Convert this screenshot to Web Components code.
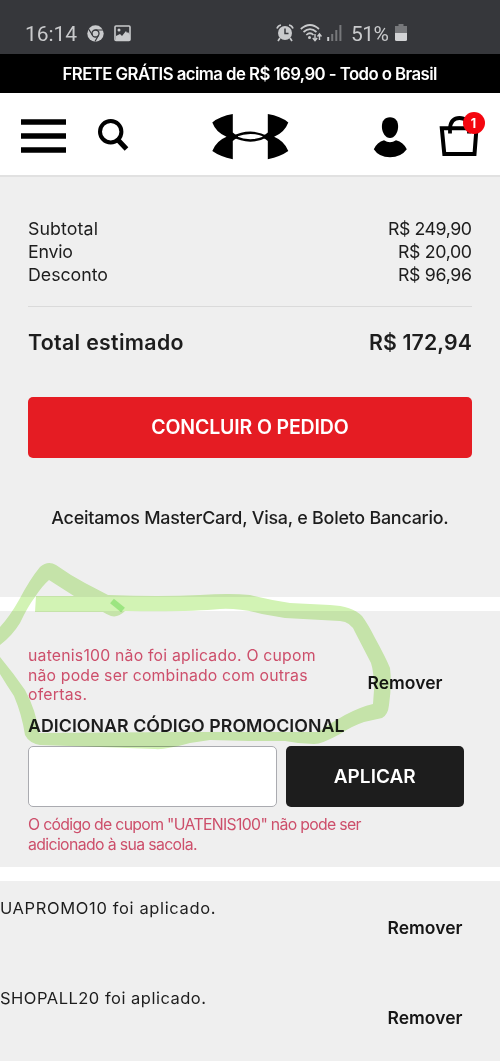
<!DOCTYPE html>
<html lang="pt-BR">
<head>
<meta charset="utf-8">
<title>Sacola</title>
<style>
body{margin:0;background:#fff;font-family:Inter,"Liberation Sans",sans-serif;color:#1d1d1d}
</style>
</head>
<body>
<bag-page></bag-page>
<script>
const define = (name, html, Base = HTMLElement) => {
  const t = document.createElement('template');
  t.innerHTML = html;
  customElements.define(name, class extends Base {
    constructor() {
      super();
      this.attachShadow({ mode: 'open' }).append(t.content.cloneNode(true));
    }
  });
};

/* One line of text, tracked so that it fills its measure. */
customElements.define('text-line', class extends HTMLElement {
  constructor() {
    super();
    this.attachShadow({ mode: 'open' }).innerHTML =
      '<style>:host{display:block;white-space:nowrap;width:max-content}span{display:inline-block}</style><span><slot></slot></span>';
  }
  connectedCallback() {
    const measure = parseFloat(this.getAttribute('measure'));
    const span = this.shadowRoot.querySelector('span');
    const n = this.textContent.length;
    const natural = span.getBoundingClientRect().width;
    if (!measure || !natural || n < 2) return;
    const ls = (measure - natural) / (n - 1);
    span.style.letterSpacing = ls.toFixed(3) + 'px';
    span.style.marginRight = (-ls).toFixed(3) + 'px';
  }
});

define('status-bar', `
<style>
:host{display:flex;box-sizing:border-box;height:54px;background:#36373b;color:#c9cacc;font:21px/24px Roboto,sans-serif;padding:22px 93px 0 25px;align-items:flex-start}
svg{display:block}
.s{flex:1}
.chrome{margin:3px 0 0 10px}.pic{margin:3px 0 0 10px}
.alarm{margin-top:1px}.wifi{margin:1px 0 0 6px}.sig{margin:2px 9px 0 5px}.bat{margin:2px 0 0 6px}
</style>
<text-line measure="52">16:14</text-line>
<svg class="chrome" width="17" height="17" viewBox="0 0 17 17"><circle cx="8.5" cy="8.5" r="8.2" fill="#c9cacc"/><circle cx="8.5" cy="8.5" r="3.5" fill="none" stroke="#36373b" stroke-width="1.3"/><path d="M8.500 5H16M5.500 10.300L1.600 4M11.500 10.300L8 16.500" stroke="#36373b" stroke-width="1.200"/></svg>
<svg class="pic" width="17" height="17" viewBox="0 0 17 17"><rect x="1" y="1" width="15" height="14.500" rx="1" fill="none" stroke="#c9cacc" stroke-width="1.600"/><path d="M2 11l4-2 2 2 4-5 1 2 1-1 2 3v5H2z" fill="#c9cacc"/><circle cx="5" cy="5" r="1.500" fill="#c9cacc"/></svg>
<span class="s"></span>
<svg class="alarm" width="18" height="19" viewBox="0 0 18 19"><circle cx="9" cy="10" r="7" fill="#c9cacc"/><path d="M1 5.500Q2 2.500 5 2M17 5.500Q16 2.500 13 2M4 15l-2 3M14 15l2 3" stroke="#c9cacc" stroke-width="1.700" fill="none"/><path d="M9 5.500V10.500H12.500" fill="none" stroke="#36373b" stroke-width="1.500"/></svg>
<svg class="wifi" width="22" height="19" viewBox="0 0 22 19"><path d="M.800 6Q10 -2 19 6M3.500 9Q10 3.300 16.500 9M6.300 12Q10 8.500 13.500 12" fill="none" stroke="#c9cacc" stroke-width="1.700"/><circle cx="9.500" cy="14.500" r="1.500" fill="#c9cacc"/><path d="M15 11v6M12.800 15l2.200 2.600 2.200-2.600M19.500 17v-6M17.500 13.500l2-2.600 2 2.600" fill="none" stroke="#c9cacc" stroke-width="1.400"/></svg>
<svg class="sig" width="15" height="17" viewBox="0 0 15 17"><path d="M1.200 17v-4" stroke="#c9cacc" stroke-width="2"/><path d="M5.200 17V10M9.300 17V6M13.400 17V1" stroke="#77787b" stroke-width="2"/></svg>
<text-line measure="38">51%</text-line>
<svg class="bat" width="12" height="17" viewBox="0 0 12 17"><path d="M3.500 0h5v2H12v7H0V2h3.500z" fill="#77787b"/><path d="M0 9h12v6.500q0 1.500-1.500 1.500h-9Q0 17 0 15.500z" fill="#d2d3d5"/></svg>`);

define('promo-banner', `
<style>:host{display:flex;justify-content:center;height:39px;background:#000;color:#fff;font-size:16.800px;font-weight:600;line-height:40px}</style>
<text-line measure="375">FRETE GRÁTIS acima de R$ 169,90 - Todo o Brasil</text-line>`);

define('cart-icon', `
<style>
:host{display:block;position:relative;width:46px;height:46px}
svg{display:block}
b{position:absolute;left:23.500px;top:0;width:22px;height:22px;border-radius:50%;background:#f4060f;color:#fff;font-size:12.500px;line-height:23px;text-align:center;font-weight:700}
</style>
<svg width="46" height="46" viewBox="439 112 46 46"><path d="M441.800 128.200H476.500L474.500 154H444.300Z" fill="none" stroke="#000" stroke-width="4"/><path d="M450 133.500V128Q451 118 459.500 118Q468 118 469 128V133.500" fill="none" stroke="#000" stroke-width="3.800"/></svg>
<b><slot></slot></b>`);

define('site-header', `
<style>
:host{display:flex;box-sizing:border-box;height:84px;background:#fff;border-bottom:2px solid #e1e1e1;padding:19px 15px 0 21px;align-items:flex-start}
svg{display:block}
.menu{margin-top:7px}.search{margin:5px 0 0 32px}.logo{margin:1px 0 0 82px}.user{margin:4px 0 0 84px}cart-icon{margin-left:31px}
svg,cart-icon{flex:none}
</style>
<svg class="menu" width="45" height="34"><path d="M0 3H45M0 17H45M0 31H45" stroke="#000" stroke-width="5.600"/></svg>
<svg class="search" width="31" height="36" viewBox="98 117 31 36"><circle cx="110.700" cy="131.700" r="10.700" fill="none" stroke="#000" stroke-width="4"/><path d="M118 140L126.500 149" stroke="#000" stroke-width="5"/></svg>
<svg class="logo" width="78" height="48" viewBox="211 113 78 48"><g id="w"><path d="M232.800 114V132.500Q234.500 134.500 238 135.500V137.800Q234.500 139 232.800 141V159.300Q220 156.500 212.300 151Q216 141 226.500 136.700Q216 132.500 212.300 122.500Q220 116 232.800 114Z"/></g><use href="#w" transform="translate(500.600 0) scale(-1 1)"/><path fill-rule="evenodd" d="M232 136.600Q241 131.500 250.300 131.500T268.500 136.600Q260 141.700 250.300 141.700T232 136.600ZM237 136.600Q243 139.200 250.300 139.200T263.500 136.600Q257.500 133.900 250.300 133.900T237 136.600Z"/></svg>
<svg class="user" width="35" height="42" viewBox="373 116 35 42"><path d="M390 117.200C395.500 117.200 398.300 121 398.100 127C397.900 133 394.500 138 390 138S382.100 133 381.900 127C381.700 121 384.500 117.200 390 117.200Z"/><path d="M384 140.200Q390 144.200 396 140.200Q403.500 142 406.800 149.300Q401 157.300 390 157.300T373.800 149.300Q377 142 384 140.200Z"/></svg>
<cart-icon>1</cart-icon>`);

define('sum-row', `
<style>:host{display:flex;justify-content:space-between;height:23px;line-height:23px;font-size:17.800px}
:host([total]){font-size:21.300px;font-weight:600;height:30px;line-height:31px}</style>
<slot></slot>`);

define('order-summary', `
<style>
:host{display:block;box-sizing:border-box;height:420px;background:#efefef;padding:40px 28px 0}
hr{border:0;border-top:1.500px solid #dadada;margin:20px 0 20px}
button{display:flex;justify-content:center;width:100%;height:61px;border:0;border-radius:5px;background:#e51c23;color:#fff;font:600 19.500px/61px Inter,sans-serif;margin:40px 0 44px;padding:0}
.pay{display:flex;justify-content:center;font-size:17.900px;line-height:31px;font-weight:450}
</style>
<sum-row><text-line measure="70">Subtotal</text-line><text-line measure="84">R$ 249,90</text-line></sum-row>
<sum-row><text-line measure="45">Envio</text-line><text-line measure="74">R$ 20,00</text-line></sum-row>
<sum-row><text-line measure="80">Desconto</text-line><text-line measure="74">R$ 96,96</text-line></sum-row>
<hr>
<sum-row total><text-line measure="155.5">Total estimado</text-line><text-line measure="103">R$ 172,94</text-line></sum-row>
<button><text-line measure="197.5">CONCLUIR O PEDIDO</text-line></button>
<div class="pay"><text-line measure="397.5">Aceitamos MasterCard, Visa, e Boleto Bancario.</text-line></div>`);

define('remove-link', `
<style>:host{display:block;color:#151515;font-size:17.500px;font-weight:600;line-height:25px}</style>
<text-line measure="75">Remover</text-line>`);

define('promo-form', `
<style>
:host{display:block;box-sizing:border-box;height:256px;background:#efefef;padding:35px 28px 0}
.err{color:#cd4f6b;font-size:15.800px;line-height:19.500px}
.top{display:flex;justify-content:space-between;padding-right:29.500px;height:68px}
remove-link{margin-top:24px}
h2{margin:0;height:32px;font-size:17.800px;line-height:24px;font-weight:600}
.form{display:grid;grid-template-columns:249px 177.500px;gap:9px;height:61px;margin-bottom:8px}
input{box-sizing:border-box;width:100%;height:61px;margin:0;border:1.500px solid #aaabb0;border-radius:5px;background:#fff}
button{display:flex;justify-content:center;border:0;border-radius:5px;background:#1d1d1d;color:#fff;font:600 19px/61px Inter,sans-serif;padding:0}
</style>
<div class="top"><div class="err">
<text-line measure="287.5">uatenis100 não foi aplicado. O cupom</text-line>
<text-line measure="279.5">não pode ser combinado com outras</text-line>
<text-line measure="59">ofertas.</text-line></div>
<remove-link></remove-link></div>
<h2><text-line measure="316.5">ADICIONAR CÓDIGO PROMOCIONAL</text-line></h2>
<div class="form"><input aria-label="Código promocional"><button><text-line measure="82">APLICAR</text-line></button></div>
<div class="err">
<text-line measure="333.5">O código de cupom "UATENIS100" não pode ser</text-line>
<text-line measure="169.5">adicionado à sua sacola.</text-line></div>`);

define('applied-coupon', `
<style>:host{display:flex;justify-content:space-between;height:90px;padding-right:37.500px;font-size:16.500px;line-height:24px}remove-link{margin-top:19px}</style>
<slot></slot><remove-link></remove-link>`);

define('applied-list', `
<style>:host{display:block;box-sizing:border-box;height:180px;background:#efefef;padding-top:15px;overflow:hidden}</style>
<applied-coupon><text-line measure="215.5">UAPROMO10 foi aplicado.</text-line></applied-coupon>
<applied-coupon><text-line measure="206">SHOPALL20 foi aplicado.</text-line></applied-coupon>`);

define('marker-stroke', `
<style>:host{display:block;position:absolute;left:0;top:555px;mix-blend-mode:multiply;pointer-events:none}svg{display:block}</style>
<svg width="400" height="200" viewBox="0 555 400 200"><path fill="#d2f3b4" d="M0 627Q10 616 19 600Q30 579 40 567Q48 560 56 565Q70 575 85 583L108 595Q160 597 200 595Q230 593 250 595Q270 600 290 603L330 605Q352 606 362 616Q368 624 375 638Q386 658 390 668Q392 684 389 705Q388 715 382 718L364 722Q352 726 340 734Q322 744 314 744Q300 744 285 741L250 741L210 740L190 743Q165 750 155 749L100 747L40 745Q29 743 25 735Q22 715 14 696Q6 684 0 674V657Q14 674 25 690Q36 710 39 733L180 732L318 732Q332 722 345 715Q360 707 373 704L374 690Q374 672 371 663L355 632Q351 622 340 621L285 618L262 614Q240 608 220 609Q190 612 125 611Q118 618 111 616Q106 614 103 612L35 612L36 596L74 596L49 580Q42 586 35 597Q28 606 20 623Q12 636 0 645Z"/><path d="M112 601L123 610" stroke="#9ce581" stroke-width="6"/></svg>`);

define('bag-page', `
<style>
:host{display:block;position:relative;width:500px;height:1064px;overflow:hidden;background:#fff}
promo-form{margin-top:14px}applied-list{margin-top:14px}
</style>
<status-bar></status-bar>
<promo-banner></promo-banner>
<site-header></site-header>
<order-summary></order-summary>
<promo-form></promo-form>
<applied-list></applied-list>
<marker-stroke></marker-stroke>`);
</script>
</body>
</html>
